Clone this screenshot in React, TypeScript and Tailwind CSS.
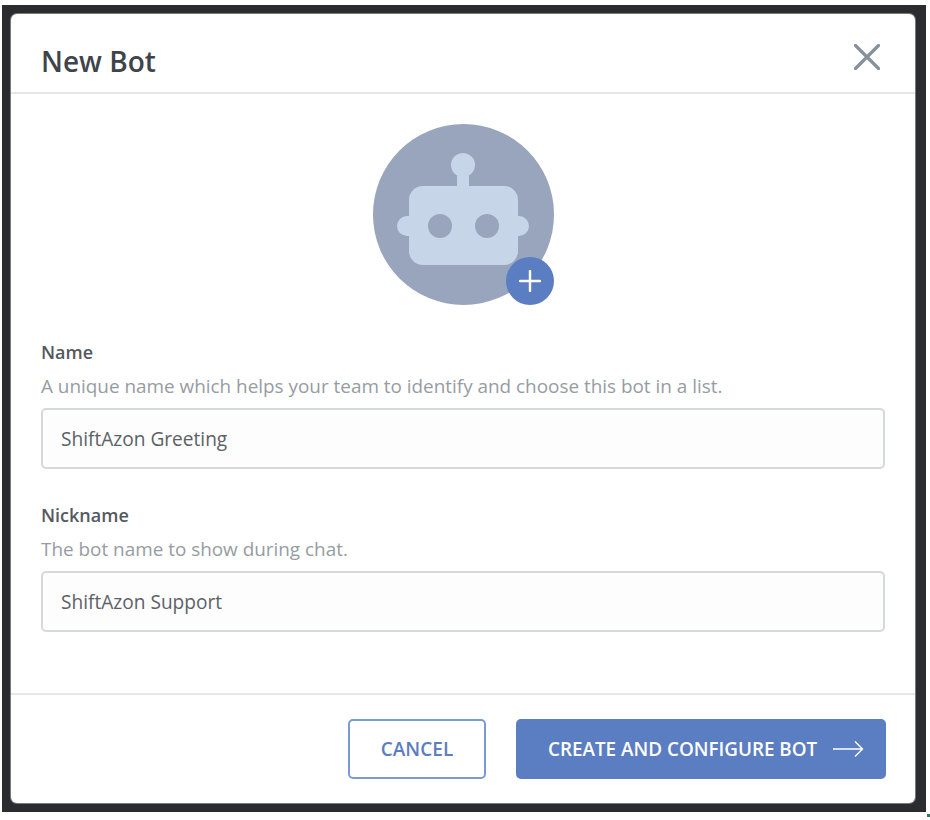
interface FieldProps {
  label: string;
  hint: string;
  value: string;
}

function Field({ label, hint, value }: FieldProps): React.JSX.Element {
  return (
    <div className="flex flex-col">
      <label className="text-[18px] leading-[24px] font-semibold text-[#54595e]">{label}</label>
      <p className="mt-[9px] text-[18.9px] leading-[26px] text-[#969ca3]">{hint}</p>
      <input
        readOnly
        value={value}
        className="mt-[9px] h-[61px] w-full rounded-[5px] border-2 border-[#d6d9d9] bg-[#fdfdfd] px-[18px] text-[19.1px] text-[#5c6166] outline-none"
      />
    </div>
  );
}

function BotAvatar(): React.JSX.Element {
  return (
    <div className="relative h-[181px] w-[181px] rounded-full bg-[#98a5bc]">
      <svg viewBox="0 0 181 181" className="h-full w-full">
        <circle cx="90" cy="41" r="12" fill="#c6d5e8" />
        <rect x="84" y="45" width="12" height="24" fill="#c6d5e8" />
        <rect x="24" y="92" width="132" height="20" rx="10" fill="#c6d5e8" />
        <rect x="36" y="62" width="109" height="79" rx="14" fill="#c6d5e8" />
        <circle cx="67" cy="102" r="12" fill="#98a5bc" />
        <circle cx="114" cy="102" r="12" fill="#98a5bc" />
      </svg>
      <div className="absolute right-0 bottom-0 flex h-[48px] w-[48px] items-center justify-center rounded-full bg-[#5b7dc2]">
        <svg viewBox="0 0 22 22" className="h-[22px] w-[22px]">
          <path d="M11 1v20M1 11h20" stroke="#fff" strokeWidth="2.4" strokeLinecap="round" />
        </svg>
      </div>
    </div>
  );
}

export default function App(): React.JSX.Element {
  return (
    <div className="relative h-[820px] w-[930px] overflow-hidden bg-white pt-[5px] pl-[2px] font-['Open_Sans',sans-serif]">
      <div className="h-[807px] w-[924px] bg-[#2b2c2f] p-[9px]">
        <div className="flex h-[789px] w-[904px] flex-col rounded-[6px] bg-white shadow-[0_0_0_1px_#77797c]">
          <header className="flex h-[80px] flex-none items-center justify-between border-b-2 border-[#e4e6ea] pt-[15px] pr-[35px] pl-[30px]">
            <h2 className="text-[28px] font-semibold text-[#3e4449]">New Bot</h2>
            <svg viewBox="0 0 26 26" className="mb-[8px] h-[26px] w-[26px]" fill="none">
              <path d="M1.5 1.5l23 23M24.5 1.5l-23 23" stroke="#87919c" strokeWidth="3.2" strokeLinecap="round" />
            </svg>
          </header>
          <div className="flex flex-1 flex-col px-[30px]">
            <div className="flex justify-center pt-[30px]">
              <BotAvatar />
            </div>
            <div className="mt-[35px] flex flex-col gap-[34px]">
              <Field
                label="Name"
                hint="A unique name which helps your team to identify and choose this bot in a list."
                value="ShiftAzon Greeting"
              />
              <Field label="Nickname" hint="The bot name to show during chat." value="ShiftAzon Support" />
            </div>
          </div>
          <footer className="flex h-[110px] flex-none items-start justify-end gap-[30px] border-t-2 border-[#e4e6ea] pt-[24px] pr-[29px]">
            <button className="h-[60px] w-[138px] rounded-[5px] border-2 border-[#7b9ad4] bg-white text-[19px] font-semibold text-[#5b7dc2]">
              CANCEL
            </button>
            <button className="flex h-[60px] w-[370px] items-center gap-[15px] rounded-[5px] bg-[#5b7dc2] pl-[32px] text-[18.85px] font-semibold text-white">
              CREATE AND CONFIGURE BOT
              <svg viewBox="0 0 32 18" className="h-[18px] w-[32px]" fill="none">
                <path d="M1 9h29M23 1.5 30.5 9 23 16.5" stroke="#fff" strokeWidth="1.4" />
              </svg>
            </button>
          </footer>
        </div>
      </div>
      <span className="absolute top-[814px] left-[927px] h-[3px] w-[3px] bg-[#2f7a5f]" />
    </div>
  );
}
